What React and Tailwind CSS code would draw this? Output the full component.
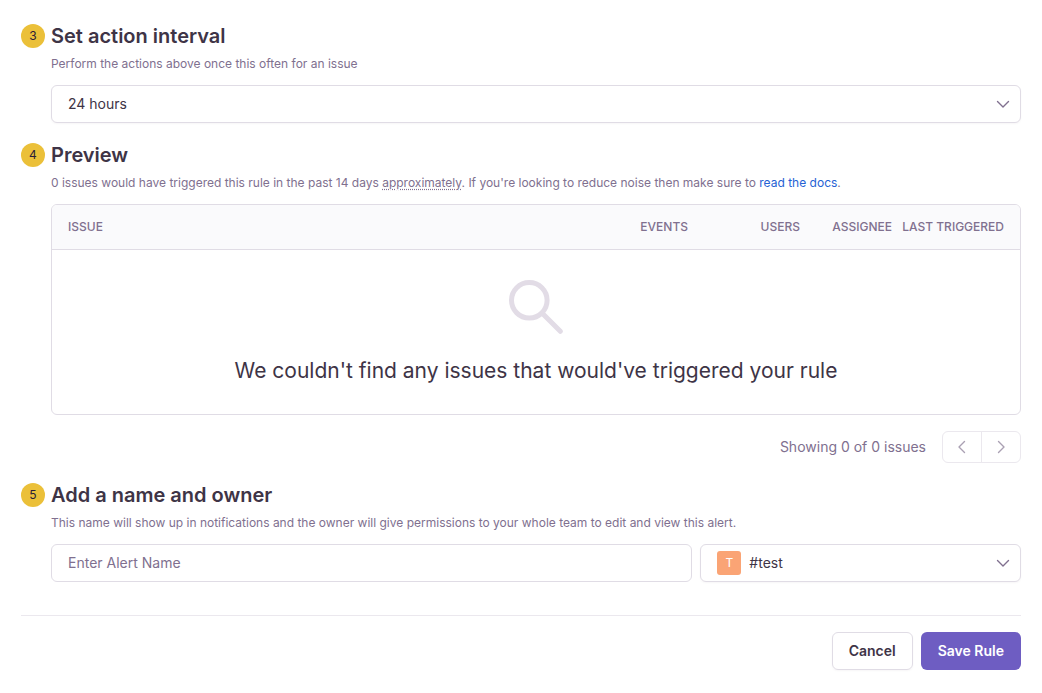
import { useState } from 'react'

const COLUMNS = [
  { key: 'events', label: 'Events', className: 'w-[112px]' },
  { key: 'users', label: 'Users', className: 'w-[112px]' },
  { key: 'assignee', label: 'Assignee', className: 'w-[92px]' },
  {
    key: 'last_triggered',
    label: 'Last Triggered',
    className: 'w-[128px] pr-4'
  }
]

function Chevron({ className, d = 'M1.5 4.5 7 10 12.5 4.5' }) {
  return (
    <svg
      viewBox="0 0 14 14"
      fill="none"
      stroke="currentColor"
      strokeWidth="1.4"
      strokeLinecap="round"
      strokeLinejoin="round"
      aria-hidden="true"
      className={className}
    >
      <path d={d} />
    </svg>
  )
}

function SearchIcon() {
  return (
    <svg
      viewBox="0 0 54 54"
      fill="none"
      stroke="#e2dce6"
      strokeWidth="5"
      strokeLinecap="round"
      aria-hidden="true"
      className="size-[54px]"
    >
      <circle cx="20.3" cy="20.3" r="17.8" />
      <path d="M33.5 33.5 51.3 51.3" />
    </svg>
  )
}

function Step({ number, title, description, children }) {
  return (
    <li className="flex gap-1.5">
      <span className="flex size-6 shrink-0 items-center justify-center rounded-full bg-[#ebc039] text-xs text-[#2b1d38]">
        {number}
      </span>
      <section className="min-w-0 flex-1">
        <h2 className="text-xl leading-6 font-semibold">{title}</h2>
        <p className="mt-1.5 mb-[11px] text-xs leading-5 text-[#80708f]">
          {description}
        </p>
        {children}
      </section>
    </li>
  )
}

function Select({ icon, className, ...props }) {
  return (
    <div className="relative">
      {icon}
      <select
        className={`h-[38px] w-full appearance-none rounded-md border border-[#e0dce5] bg-white pr-10 text-sm shadow-[0_1px_2px_rgba(43,34,51,0.04)] ${className}`}
        {...props}
      />
      <Chevron className="pointer-events-none absolute top-3 right-[11px] size-3.5 text-[#80708f]" />
    </div>
  )
}

export default function AlertRuleForm() {
  const [name, setName] = useState('')

  return (
    <form
      className="px-[21px] pt-6 pb-6 font-[Inter,Roboto,sans-serif] text-[#3e3446]"
      onSubmit={e => e.preventDefault()}
    >
      <ol className="flex flex-col gap-5">
        <Step
          number={3}
          title="Set action interval"
          description="Perform the actions above once this often for an issue"
        >
          <Select aria-label="Action interval" className="pl-4">
            <option>24 hours</option>
          </Select>
        </Step>

        <Step
          number={4}
          title="Preview"
          description={
            <>
              0 issues would have triggered this rule in the past 14 days{' '}
              <span className="underline decoration-dotted underline-offset-2">
                approximately
              </span>
              . If you're looking to reduce noise then make sure to{' '}
              <a href="#docs" className="text-[#2562d4]">
                read the docs
              </a>
              .
            </>
          }
        >
          <div className="overflow-hidden rounded-md border border-[#e0dce5]">
            <table className="w-full table-fixed">
              <thead className="bg-[#fafafc] text-xs text-[#80708f] uppercase">
                <tr className="h-11 border-b border-[#e0dce5]">
                  <th className="pl-4 text-left font-medium">Issue</th>
                  {COLUMNS.map(({ key, label, className }) => (
                    <th
                      key={key}
                      className={`text-right font-medium whitespace-nowrap ${className}`}
                    >
                      {label}
                    </th>
                  ))}
                </tr>
              </thead>
              <tbody>
                <tr>
                  <td colSpan={5}>
                    <div className="flex flex-col items-center gap-6 py-[30px]">
                      <SearchIcon />
                      <p className="text-center text-[21px] leading-[26px]">
                        We couldn't find any issues that would've triggered
                        your rule
                      </p>
                    </div>
                  </td>
                </tr>
              </tbody>
            </table>
          </div>
          <div className="mt-4 flex items-center justify-end gap-4 text-sm text-[#80708f]">
            <span>Showing 0 of 0 issues</span>
            <div className="flex h-8 divide-x divide-[#ebe8ee] rounded-md border border-[#ebe8ee] text-[#aaa0b3]">
              <button
                type="button"
                aria-label="Previous"
                disabled
                className="px-3"
              >
                <Chevron className="size-3.5" d="M9.5 1.5 4 7l5.5 5.5" />
              </button>
              <button
                type="button"
                aria-label="Next"
                disabled
                className="px-3"
              >
                <Chevron className="size-3.5" d="M4.5 1.5 10 7l-5.5 5.5" />
              </button>
            </div>
          </div>
        </Step>

        <Step
          number={5}
          title="Add a name and owner"
          description="This name will show up in notifications and the owner will give permissions to your whole team to edit and view this alert."
        >
          <div className="grid grid-cols-[2fr_1fr] gap-2">
            <input
              type="text"
              aria-label="Alert name"
              placeholder="Enter Alert Name"
              className="h-[38px] min-w-0 rounded-md border border-[#e0dce5] px-4 text-sm placeholder:text-[#80708f]"
              value={name}
              onChange={e => setName(e.target.value)}
            />
            <Select
              aria-label="Owner"
              className="pl-12"
              icon={
                <span className="pointer-events-none absolute top-[7px] left-[17px] flex size-6 items-center justify-center rounded-[3px] bg-[#faa475] text-xs text-white">
                  T
                </span>
              }
            >
              <option>#test</option>
            </Select>
          </div>
        </Step>
      </ol>

      <div className="mt-[33px] flex justify-end gap-2 border-t border-[#ebe8ee] pt-4 text-sm font-semibold">
        <button
          type="button"
          className="h-[38px] rounded-md border border-[#e0dce5] px-4 shadow-[0_1px_2px_rgba(43,34,51,0.04)]"
        >
          Cancel
        </button>
        <button
          type="submit"
          className="h-[38px] rounded-md bg-[#6e5dc2] px-[17px] text-white"
        >
          Save Rule
        </button>
      </div>
    </form>
  )
}
